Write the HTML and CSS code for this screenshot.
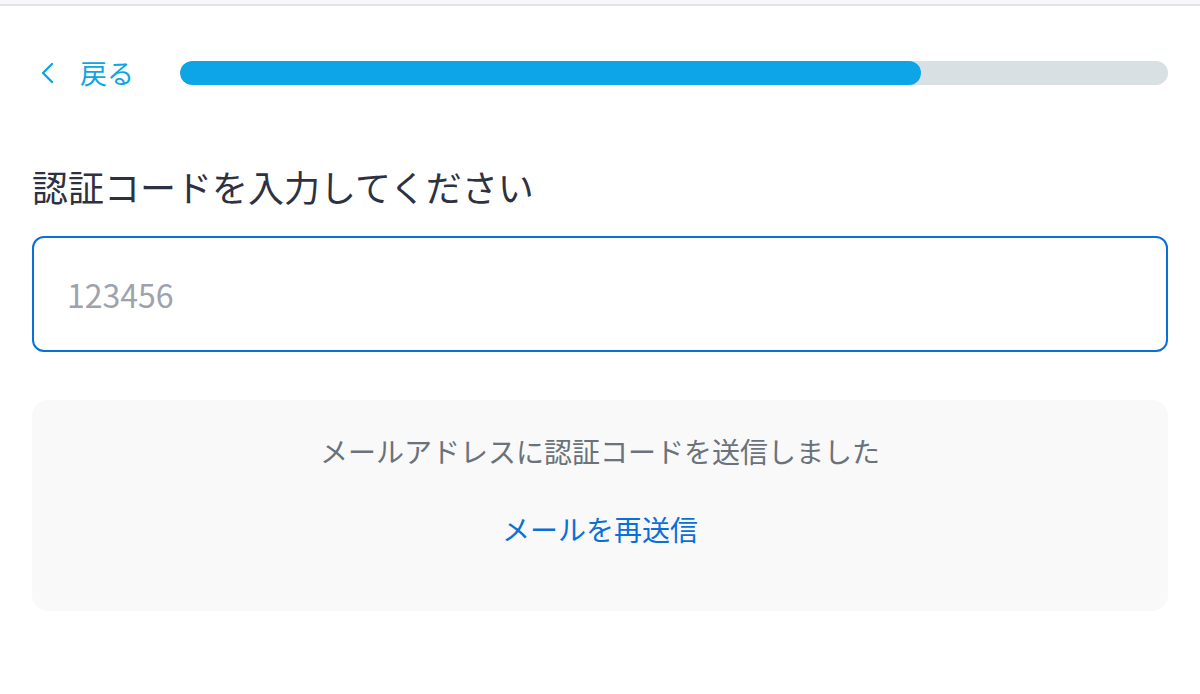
FILE: index.html
```html
<!DOCTYPE html>
<html lang="ja">
  <head>
    <meta charset="UTF-8" />
    <meta name="viewport" content="width=device-width, initial-scale=1.0" />
    <title>認証コード</title>
    <link rel="stylesheet" href="styles.css">
  </head>
  <body>
    <div class="topbar"></div>
    <main class="page">
      <div class="nav">
        <a class="back" href="#">
          <svg class="back-icon" width="24" height="24" viewBox="0 0 24 24" fill="none">
            <path d="M16 3 L7 12 L16 21" stroke="currentColor" stroke-width="2.4" stroke-linecap="round" stroke-linejoin="round" />
          </svg>
          <span>戻る</span>
        </a>
        <div class="progress">
          <div class="progress-fill" style="width: 75%"></div>
        </div>
      </div>

      <h1 class="title">認証コードを入力してください</h1>

      <input class="code-input" type="text" inputmode="numeric" placeholder="123456" />

      <div class="info">
        <p class="info-text">メールアドレスに認証コードを送信しました</p>
        <a class="resend" href="#">メールを再送信</a>
      </div>
    </main>
  </body>
</html>
```

FILE: styles.css
```css
body {
  font-family: "Noto Sans CJK JP", "Noto Sans", sans-serif;
  background-color: #ffffff;
  margin: 0;
  color: #2d3142;
}
.topbar {
  height: 4px;
  background-color: #f8f7fb;
  border-bottom: 2px solid #e3e2ea;
}
.page {
  padding: 0 32px;
}
.nav {
  display: flex;
  align-items: center;
  height: 24px;
  margin-top: 55px;
}
.back {
  display: flex;
  align-items: center;
  color: #0ea5e6;
  text-decoration: none;
  font-size: 27px;
  line-height: 24px;
  padding-left: 4px;
  margin-right: 46px;
}
.back-icon {
  margin-right: 20px;
}
.progress {
  flex: 1;
  height: 24px;
  border-radius: 12px;
  background-color: #d9e0e4;
  overflow: hidden;
}
.progress-fill {
  height: 100%;
  border-radius: 12px;
  background-color: #0ea5e6;
}
.title {
  margin: 76px 0 25px;
  font-size: 36px;
  font-weight: 400;
  line-height: 50px;
  color: #2d3142;
}
.code-input {
  display: block;
  box-sizing: border-box;
  width: 100%;
  height: 116px;
  padding: 0 33px;
  border: 2px solid #0a6fdb;
  border-radius: 12px;
  font-family: inherit;
  font-size: 32px;
  color: #2d3142;
  outline: none;
}
.code-input::placeholder {
  color: #9ea2ad;
}
.info {
  margin-top: 48px;
  height: 211px;
  box-sizing: border-box;
  padding-top: 31px;
  background-color: #f9f9f9;
  border-radius: 16px;
  text-align: center;
}
.info-text {
  margin: 0;
  font-size: 28px;
  line-height: 40px;
  color: #6a727b;
}
.resend {
  display: inline-block;
  margin-top: 38px;
  font-size: 28px;
  line-height: 40px;
  color: #0a6fdb;
  text-decoration: none;
}
```
